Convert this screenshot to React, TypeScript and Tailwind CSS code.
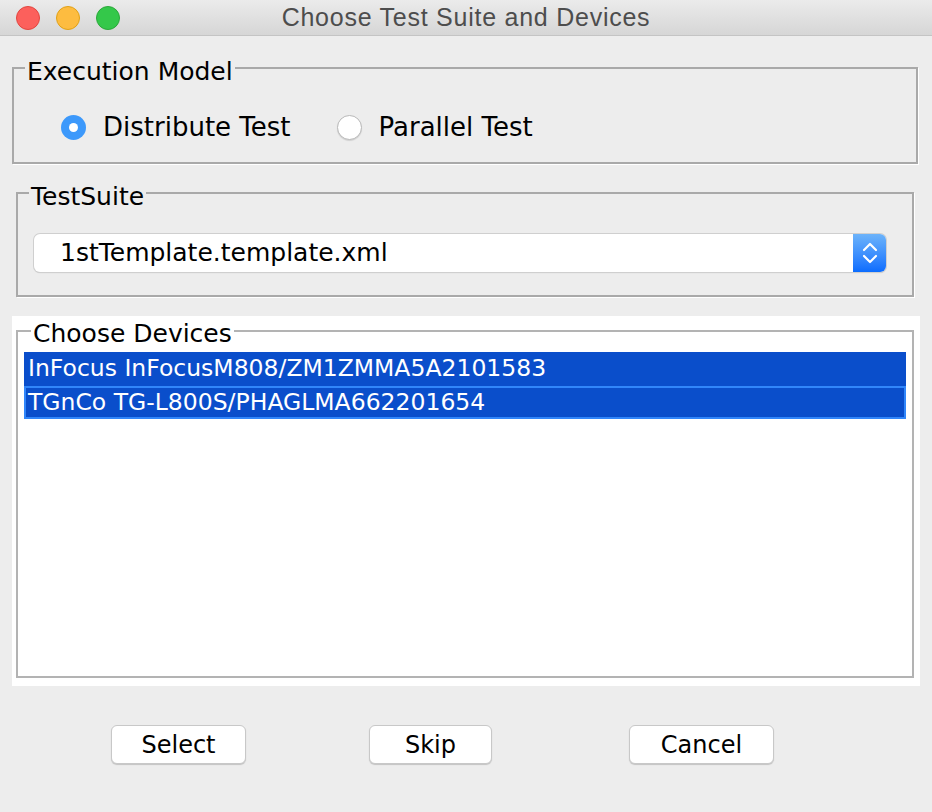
import { useState } from "react";

const devices = [
  "InFocus InFocusM808/ZM1ZMMA5A2101583",
  "TGnCo TG-L800S/PHAGLMA662201654",
];

function Radio({ checked, label, onClick }: { checked: boolean; label: string; onClick: () => void }) {
  return (
    <button type="button" onClick={onClick} className="flex items-center gap-[17px]">
      {checked ? (
        <span className="flex h-[25px] w-[25px] items-center justify-center rounded-full bg-[#3d99fb]">
          <span className="h-[9px] w-[9px] rounded-full bg-white" />
        </span>
      ) : (
        <span className="h-[25px] w-[25px] rounded-full border border-[#b9b9b9] bg-white shadow-[0_1px_1px_rgba(0,0,0,0.12)]" />
      )}
      <span>{label}</span>
    </button>
  );
}

function MacButton({ label, width }: { label: string; width: string }) {
  return (
    <button
      type="button"
      className={`h-[39px] ${width} rounded-[6px] border border-[#c8c8c8] bg-white text-[24px] leading-none text-black shadow-[0_1px_1px_rgba(0,0,0,0.18)]`}
    >
      {label}
    </button>
  );
}

export default function App() {
  const [mode, setMode] = useState("distribute");

  return (
    <div className="h-[812px] w-[932px] overflow-hidden bg-[#ededed] font-['DejaVu_Sans',sans-serif] text-black">
      {/* title bar */}
      <div className="relative flex h-[36px] items-center border-b border-[#c4c4c4] bg-gradient-to-b from-[#ebebeb] to-[#d6d6d6]">
        <div className="flex gap-[16px] pl-[16px]">
          <span className="h-[24px] w-[24px] rounded-full border border-[#e2463f] bg-[#fc605c]" />
          <span className="h-[24px] w-[24px] rounded-full border border-[#e1a116] bg-[#fdbc40]" />
          <span className="h-[24px] w-[24px] rounded-full border border-[#2ba83a] bg-[#34c84a]" />
        </div>
        <div className="absolute inset-0 flex items-center justify-center font-['Liberation_Sans',sans-serif] text-[25px] tracking-[0.75px] text-[#4d4d4d]">
          Choose Test Suite and Devices
        </div>
      </div>

      {/* Execution Model */}
      <fieldset className="ml-[12px] mt-[16px] h-[112px] w-[906px] border-2 border-[#a9a9a9] shadow-[1px_1px_0_#ffffff] px-0">
        <legend className="ml-[11px] px-[2px] pt-[8px] text-[25px] leading-[24px]">Execution Model</legend>
        <div className="flex items-center gap-[46px] pl-[47px] pt-[24px] text-[26px]">
          <Radio checked={mode === "distribute"} label="Distribute Test" onClick={() => setMode("distribute")} />
          <Radio checked={mode === "parallel"} label="Parallel Test" onClick={() => setMode("parallel")} />
        </div>
      </fieldset>

      {/* TestSuite */}
      <fieldset className="ml-[16px] mt-[13px] h-[120px] w-[898px] border-2 border-[#a9a9a9] shadow-[1px_1px_0_#ffffff] px-0">
        <legend className="ml-[11px] px-[2px] pt-[8px] text-[25px] leading-[24px]">TestSuite</legend>
        <div className="ml-[16px] mt-[25px] flex h-[38px] w-[852px] items-stretch rounded-[6px] bg-white shadow-[0_0_0_1px_#cfcfcf,0_1px_1px_rgba(0,0,0,0.2)]">
          <div className="flex flex-1 items-center pl-[26px] text-[25px]">1stTemplate.template.xml</div>
          <div className="flex w-[33px] flex-col items-center justify-center gap-[2px] rounded-r-[6px] bg-gradient-to-b from-[#6cb3fa] to-[#0a6cfe]">
            <svg width="16" height="10" viewBox="0 0 16 10" fill="none" stroke="white" strokeWidth="2.2" strokeLinecap="round" strokeLinejoin="round">
              <path d="M2 8 L8 2 L14 8" />
            </svg>
            <svg width="16" height="10" viewBox="0 0 16 10" fill="none" stroke="white" strokeWidth="2.2" strokeLinecap="round" strokeLinejoin="round">
              <path d="M2 2 L8 8 L14 2" />
            </svg>
          </div>
        </div>
      </fieldset>

      {/* Choose Devices */}
      <div className="ml-[12px] mt-[19px] h-[370px] w-[908px] bg-white px-[4px]">
        <fieldset className="h-[362px] w-[898px] border-2 border-[#b3b3b3] px-0">
          <legend className="ml-[13px] px-[2px] pt-[6px] text-[25px] leading-[24px]">Choose Devices</legend>
          <div className="flex flex-col px-[6px] pt-[6px] text-[23.5px] text-white">
            {devices.map((d, i) => (
              <div
                key={d}
                className={
                  i === devices.length - 1
                    ? "flex h-[33px] items-center border-2 border-[#3186fa] bg-[#0a4ecb] pl-[2px]"
                    : "flex h-[34px] items-center bg-[#0a4ecb] pl-[4px]"
                }
              >
                {d}
              </div>
            ))}
          </div>
        </fieldset>
      </div>

      {/* buttons */}
      <div className="mt-[39px] flex items-center">
        <div className="ml-[111px]"><MacButton label="Select" width="w-[135px]" /></div>
        <div className="ml-[123px]"><MacButton label="Skip" width="w-[123px]" /></div>
        <div className="ml-[137px]"><MacButton label="Cancel" width="w-[145px]" /></div>
      </div>
    </div>
  );
}
